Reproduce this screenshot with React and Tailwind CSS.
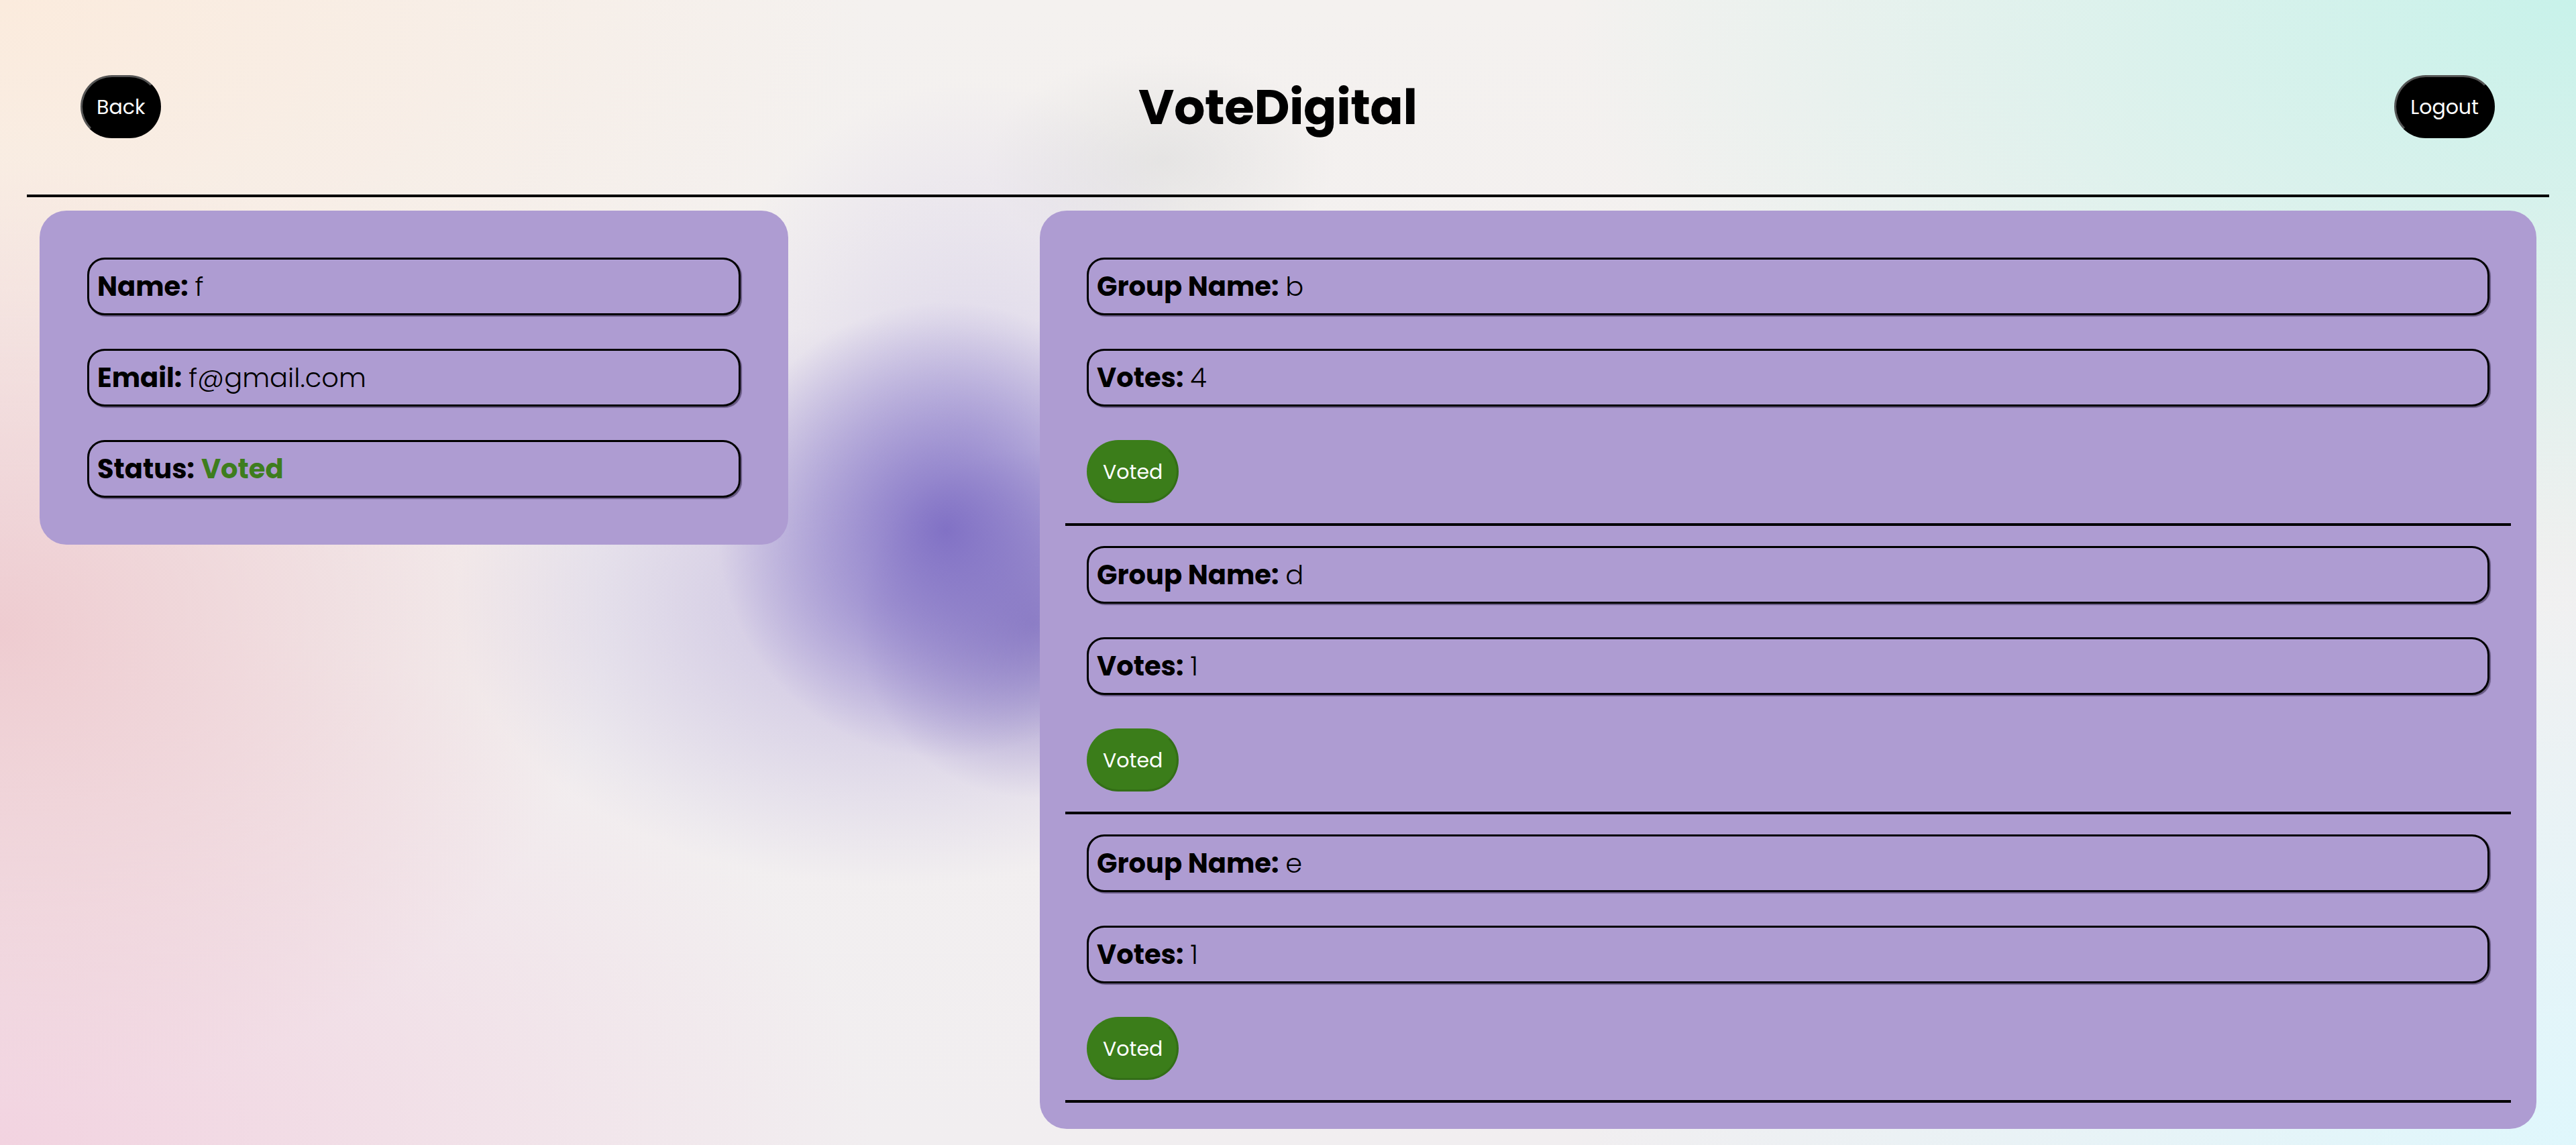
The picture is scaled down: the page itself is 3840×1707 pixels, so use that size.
import React from 'react';

const groups = [
  { name: 'b', votes: 4 },
  { name: 'd', votes: 1 },
  { name: 'e', votes: 1 },
];

function Field({ label, children, valueClass = 'font-light' }) {
  return (
    <div className="flex items-center h-[86px] px-[12px] rounded-[26px] border-[3px] border-black shadow-[2px_2px_1px_rgba(40,30,60,0.55)] text-[40px] text-black">
      <span className="font-bold">{label}</span>
      <span className={`ml-[10px] ${valueClass}`}>{children}</span>
    </div>
  );
}

function PillButton({ children, className }) {
  return (
    <button className={`h-[94px] rounded-full px-[21px] text-[30px] border-[3px] ${className}`}>
      {children}
    </button>
  );
}

export default function App() {
  return (
    <div className="min-h-screen w-full pb-[24px] font-['Poppins','Inter','Liberation_Sans',sans-serif] bg-[radial-gradient(circle_340px_at_1410px_790px,rgba(126,110,196,0.95)_0%,rgba(126,110,196,0.55)_40%,rgba(126,110,196,0)_100%),radial-gradient(circle_260px_at_1540px_930px,rgba(125,108,186,0.7)_0%,rgba(125,108,186,0)_100%),radial-gradient(ellipse_650px_420px_at_1330px_900px,rgba(165,150,212,0.55)_0%,rgba(165,150,212,0)_100%),radial-gradient(ellipse_420px_520px_at_1450px_640px,rgba(190,180,228,0.45),rgba(190,180,228,0)),radial-gradient(ellipse_260px_160px_at_1730px_240px,rgba(220,220,220,0.6),rgba(220,220,220,0)),radial-gradient(ellipse_900px_700px_at_0%_55%,rgba(238,200,205,0.9),rgba(238,200,205,0)),radial-gradient(ellipse_1300px_800px_at_0%_0%,#fbebdd,rgba(251,235,221,0)),radial-gradient(ellipse_1500px_900px_at_100%_0%,#c8f2ea,rgba(200,242,234,0)),radial-gradient(ellipse_1300px_800px_at_0%_100%,#f2d3e0,rgba(242,211,224,0)),radial-gradient(ellipse_1500px_900px_at_100%_100%,#dff7fc,rgba(223,247,252,0)),linear-gradient(#f4f1ef,#f1eef0)]">
      <header className="flex items-center justify-between pt-[112px] pl-[120px] pr-[121px]">
        <PillButton className="bg-black text-white border-t-[#555] border-l-[#555] border-r-black border-b-black">
          Back
        </PillButton>
        <h1 className="text-[73px] font-bold text-black leading-none tracking-[-0.5px]">VoteDigital</h1>
        <PillButton className="bg-black text-white border-t-[#555] border-l-[#555] border-r-black border-b-black">
          Logout
        </PillButton>
      </header>

      <div className="mx-[40px] mt-[84px] h-[4px] bg-black" />

      <main className="mt-[20px] flex items-start justify-between px-[59px]">
        <section className="w-[1116px] rounded-[40px] bg-[#ae9cd2] px-[71px] py-[70px] flex flex-col gap-[50px]">
          <Field label="Name:">f</Field>
          <Field label="Email:">f@gmail.com</Field>
          <Field label="Status:" valueClass="font-bold text-[#3e7d1e]">Voted</Field>
        </section>

        <section className="w-[2231px] rounded-[40px] bg-[#ae9cd2] px-[38px] pt-[40px] pb-[39px]">
          {groups.map((g, i) => (
            <div key={i}>
              <div className="px-[32px] py-[30px] flex flex-col gap-[50px]">
                <Field label="Group Name:">{g.name}</Field>
                <Field label="Votes:">{g.votes}</Field>
                <div>
                  <PillButton className="bg-[#3b7d1a] text-white border-[#3b7d1a] border-b-[#336e17] border-r-[#336e17]">
                    Voted
                  </PillButton>
                </div>
              </div>
              <div className="h-[4px] bg-black" />
            </div>
          ))}
        </section>
      </main>
    </div>
  );
}
